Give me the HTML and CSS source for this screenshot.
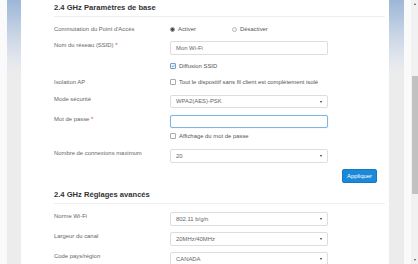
FILE: index.html
```html
<!DOCTYPE html>
<html lang="fr">
<head>
<meta charset="utf-8">
<title>Paramètres Wi-Fi</title>
<link rel="stylesheet" href="styles.css">
</head>
<body>
<div class="frame">
  <div class="edge"></div>
  <div class="strip"></div>
  <main class="card">
    <section class="section">
      <h2 class="section-title">2.4 GHz Paramètres de base</h2>
      <div class="form">
        <div class="row row-short row-first">
          <span class="label">Commutation du Point d'Accès</span>
          <div class="radios">
            <span class="opt"><span class="radio on"></span>Activer</span>
            <span class="opt"><span class="radio"></span>Désactiver</span>
          </div>
        </div>
        <div class="row">
          <span class="label">Nom du réseau (SSID) <em>*</em></span>
          <div class="field">Mon Wi-Fi</div>
        </div>
        <div class="row row-short">
          <span class="label"></span>
          <span class="opt"><span class="check on"><svg viewBox="0 0 8 8"><path d="M1.5 4.2 L3.3 6 L6.6 1.9" fill="none" stroke="#2a7fd4" stroke-width="1.2"/></svg></span>Diffusion SSID</span>
        </div>
        <div class="row row-short">
          <span class="label">Isolation AP</span>
          <span class="opt nowrap"><span class="check"></span>Tout le dispositif sans fil client est complètement isolé</span>
        </div>
        <div class="row row-compact push">
          <span class="label">Mode sécurité</span>
          <div class="field select">WPA2(AES)-PSK</div>
        </div>
        <div class="row row-compact push1">
          <span class="label">Mot de passe <em>*</em></span>
          <div class="field focus"></div>
        </div>
        <div class="row row-short pull">
          <span class="label"></span>
          <span class="opt"><span class="check"></span>Affichage du mot de passe</span>
        </div>
        <div class="row push">
          <span class="label">Nombre de connexions maximum</span>
          <div class="field select">20</div>
        </div>
        <div class="actions">
          <button class="btn" type="button">Appliquer</button>
        </div>
      </div>
    </section>
    <section class="section">
      <h2 class="section-title">2.4 GHz Réglages avancés</h2>
      <div class="form form-adv">
        <div class="row">
          <span class="label">Norme Wi-Fi</span>
          <div class="field select">802.11 b/g/n</div>
        </div>
        <div class="row">
          <span class="label">Largeur du canal</span>
          <div class="field select">20MHz/40MHz</div>
        </div>
        <div class="row">
          <span class="label">Code pays/région</span>
          <div class="field select">CANADA</div>
        </div>
      </div>
    </section>
  </main>
  <div class="strip"></div>
  <div class="edge"></div>
  <div class="scrollbar">
    <span class="arrow up"></span>
    <span class="thumb"></span>
    <span class="arrow down"></span>
  </div>
</div>
</body>
</html>
```
FILE: styles.css
```css
* { box-sizing: border-box; }
html, body { margin: 0; padding: 0; }
body {
  width: 418px;
  height: 264px;
  overflow: hidden;
  background: #fafafa;
  font-family: "Liberation Sans", Arial, sans-serif;
  color: #666;
}
.frame {
  display: grid;
  grid-template-columns: 7px 14px 368px 15px 7px 7px;
  height: 264px;
}
.edge { background: #fafafa; }
.strip {
  background: linear-gradient(to bottom, #9db6d7 0px, #c9d5e5 35px, #e3e7ed 60px, #ececec 75px);
}
.card {
  background: #fff;
  padding: 0 4px 0 33px;
  overflow: hidden;
}
.section-title {
  margin: 0;
  height: 17px;
  line-height: 16px;
  font-size: 7.6px;
  font-weight: bold;
  color: #333;
  border-bottom: 1px solid #eee;
}
.form {
  display: flex;
  flex-direction: column;
  gap: 6px;
  padding-top: 6px;
}
.form-adv { padding-top: 8px; }
.row {
  display: grid;
  grid-template-columns: 116px 158px;
  align-items: start;
  height: 14px;
  font-size: 5.9px;
}
.row-short { height: 10px; align-items: center; }
.row-first { height: 12px; }
.row-compact { height: 13px; }
.row-compact .field { height: 13px; line-height: 11px; }
.push { margin-top: 2px; }
.push1 { margin-top: 1px; }
.pull { margin-top: -3px; }
.label {
  color: #666;
  line-height: 9px;
}
.label em { font-style: normal; color: #e53935; }
.radios { display: flex; }
.opt {
  display: flex;
  align-items: center;
  gap: 3px;
  color: #555;
  line-height: 8px;
}
.radios .opt { width: 62px; }
.nowrap { white-space: nowrap; }
.radio {
  width: 5px;
  height: 5px;
  border-radius: 50%;
  border: 1px solid #bbb;
  background: #f4f4f4;
}
.radio.on {
  border-color: #888;
  background: radial-gradient(circle, #444 0 1.3px, #fff 1.6px);
}
.check {
  width: 6px;
  height: 6px;
  border: 1px solid #aaa;
  border-radius: 1px;
  background: #fff;
  display: flex;
}
.check.on { border-color: #7a9cc8; background: #eaf2fb; }
.check svg { width: 100%; height: 100%; }
.field {
  height: 14px;
  border: 1px solid #ddd;
  border-radius: 2px;
  background: #fff;
  padding-left: 5px;
  line-height: 12px;
  color: #666;
  position: relative;
}
.field.focus {
  border-color: #7fb6e8;
  box-shadow: 0 0 1px rgba(102, 175, 233, 0.5);
}
.select::after {
  content: "";
  position: absolute;
  right: 5px;
  top: 5px;
  border-left: 1.5px solid transparent;
  border-right: 1.5px solid transparent;
  border-top: 2.5px solid #333;
}
.actions {
  display: flex;
  justify-content: flex-end;
  padding-right: 8px;
}
.btn {
  width: 35px;
  height: 14px;
  padding: 0;
  border: 1px solid #1478c4;
  border-radius: 2px;
  background: #1a8ad8;
  color: #fff;
  font-family: "Liberation Sans", Arial, sans-serif;
  font-size: 5.9px;
}
.section + .section { margin-top: 4px; }
.scrollbar {
  background: #f1f1f1;
  display: flex;
  flex-direction: column;
  align-items: center;
  padding: 3px 0 3px;
}
.thumb {
  width: 6px;
  height: 118px;
  margin-top: 71px;
  background: #c1c1c1;
}
.arrow {
  width: 0;
  height: 0;
  border-left: 1.5px solid transparent;
  border-right: 1.5px solid transparent;
}
.arrow.up { border-bottom: 2px solid #555; }
.arrow.down { border-top: 2px solid #555; margin-top: auto; }
```
